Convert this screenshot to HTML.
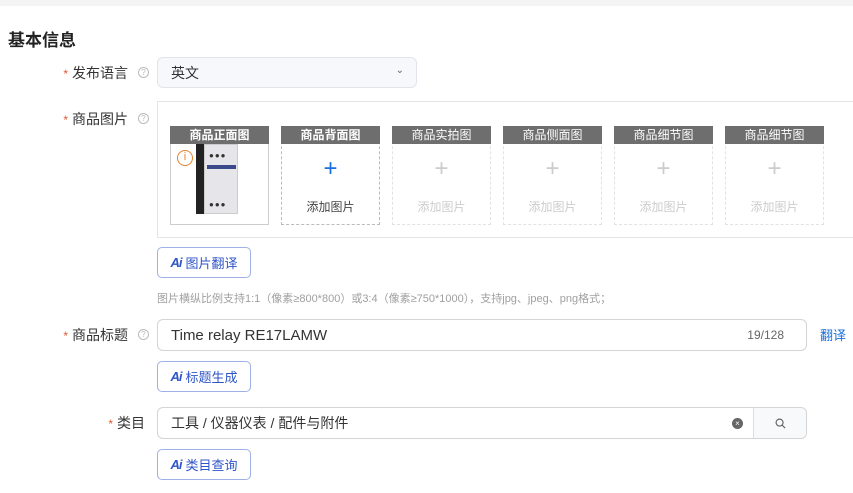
<!DOCTYPE html>
<html><head><meta charset="utf-8"><style>
*{box-sizing:border-box;margin:0;padding:0}
body{width:853px;height:493px;overflow:hidden;background:#fff;font-family:"Liberation Sans","Noto Sans CJK SC",sans-serif;color:#333;position:relative}
.abs{position:absolute}
.top{left:0;top:0;width:853px;height:6px;background:#f4f4f5}
h1{position:absolute;left:8px;top:26px;font-size:17px;font-weight:bold;color:#222}
.lbl{position:absolute;font-size:14px;color:#333;text-align:right;width:120px}
.lbl b{color:#e4572e;font-weight:normal;font-size:12px;margin-right:4px}
.q{position:absolute;width:11px;height:11px;border:1px solid #bbb;border-radius:50%;font-size:8px;color:#bbb;text-align:center;line-height:9px}
.inp{position:absolute;border:1px solid #d4d4d4;border-radius:6px;font-size:14px;color:#333;padding-left:13px;display:flex;align-items:center}
.box{left:157px;top:101px;width:710px;height:137px;border:1px solid #e4e4e4}
.tile{position:absolute;top:126px;width:99px;height:99px;border:1px dashed #e2e2e2;text-align:center}
.tile .hd{position:absolute;left:-1px;top:-1px;width:99px;height:18px;background:#6e6e6e;color:#fff;font-size:12px;line-height:18px}
.tile .pl{position:absolute;left:0;width:100%;top:30px;font-size:24px;line-height:24px;color:#ccc;font-weight:300}
.tile .ad{position:absolute;left:0;width:100%;top:71px;font-size:12px;color:#ccc}
.btn{position:absolute;left:157px;width:94px;height:31px;border:1px solid #9fb0e6;border-radius:5px;color:#2f55c8;font-size:13px;display:flex;align-items:center;justify-content:center;gap:4px}
.btn i{font-style:italic;font-weight:bold;font-size:13px;letter-spacing:-1px}
</style></head><body>
<div class="abs top"></div>
<h1>基本信息</h1>

<div class="lbl" style="left:8px;top:63px"><b>*</b>发布语言</div>
<div class="q" style="left:138px;top:67px">?</div>
<div class="inp" style="left:157px;top:57px;width:260px;height:31px;background:#f6f8fb;border-color:#e1e4ea">英文<span style="position:absolute;right:12px;top:7px;font-size:10px;color:#666">&#8964;</span></div>

<div class="lbl" style="left:8px;top:109px"><b>*</b>商品图片</div>
<div class="q" style="left:138px;top:113px">?</div>
<div class="abs box"></div>

<div class="tile" style="left:170px;border:1px solid #ccc">
 <div class="hd" style="font-weight:bold">商品正面图</div>
 <div class="abs" style="left:25px;top:17px;width:9px;height:70px;background:#222"></div>
 <div class="abs" style="left:33px;top:17px;width:34px;height:70px;background:#e6e6ea;border:1px solid #ccc"></div>
 <div class="abs" style="left:38px;top:24px;font-size:8px;color:#333;letter-spacing:1px">●●●</div>
 <div class="abs" style="left:36px;top:38px;width:29px;height:4px;background:#3a4a8a"></div>
 <div class="abs" style="left:38px;top:73px;font-size:8px;color:#333;letter-spacing:1px">●●●</div>
 <div class="abs" style="left:6px;top:23px;width:16px;height:16px;border:1.5px solid #e8822a;border-radius:50%;color:#e8822a;font-size:11px;line-height:13px;text-align:center">i</div>
</div>
<div class="tile" style="left:281px;border-color:#bbb">
 <div class="hd" style="font-weight:bold">商品背面图</div>
 <div class="pl" style="color:#1a6fe0">+</div>
 <div class="ad" style="color:#444">添加图片</div>
</div>
<div class="tile" style="left:392px"><div class="hd">商品实拍图</div><div class="pl">+</div><div class="ad">添加图片</div></div>
<div class="tile" style="left:503px"><div class="hd">商品侧面图</div><div class="pl">+</div><div class="ad">添加图片</div></div>
<div class="tile" style="left:614px"><div class="hd">商品细节图</div><div class="pl">+</div><div class="ad">添加图片</div></div>
<div class="tile" style="left:725px"><div class="hd">商品细节图</div><div class="pl">+</div><div class="ad">添加图片</div></div>

<div class="btn" style="top:247px"><i>Ai</i>图片翻译</div>
<div class="abs" style="left:157px;top:290px;font-size:11px;color:#a0a0a0;white-space:nowrap">图片横纵比例支持1:1（像素≥800*800）或3:4（像素≥750*1000），支持jpg、jpeg、png格式；</div>

<div class="lbl" style="left:8px;top:325px"><b>*</b>商品标题</div>
<div class="q" style="left:138px;top:329px">?</div>
<div class="inp" style="left:157px;top:319px;width:650px;height:32px;font-size:15px">Time relay RE17LAMW<span style="position:absolute;right:22px;font-size:12px;color:#666">19/128</span></div>
<div class="abs" style="left:820px;top:325px;font-size:13px;color:#1a6fe0">翻译</div>

<div class="btn" style="top:361px"><i>Ai</i>标题生成</div>

<div class="lbl" style="left:25px;top:413px"><b>*</b>类目</div>
<div class="inp" style="left:157px;top:407px;width:650px;height:32px">工具 / 仪器仪表 / 配件与附件
 <span style="position:absolute;right:63px;top:10px;width:11px;height:11px;border-radius:50%;background:#666;color:#fff;font-size:8px;line-height:11px;text-align:center">×</span>
 <span style="position:absolute;right:0;top:0;width:53px;height:30px;border-left:1px solid #ddd;background:#f7f9fb;border-radius:0 6px 6px 0;font-size:11px;color:#666;display:flex;align-items:center;justify-content:center">
 <svg width="11" height="11" viewBox="0 0 12 12"><circle cx="5" cy="5" r="3.8" fill="none" stroke="#666" stroke-width="1.3"/><path d="M8 8l3 3" stroke="#666" stroke-width="1.3"/></svg></span>
</div>

<div class="btn" style="top:449px"><i>Ai</i>类目查询</div>
</body></html>
